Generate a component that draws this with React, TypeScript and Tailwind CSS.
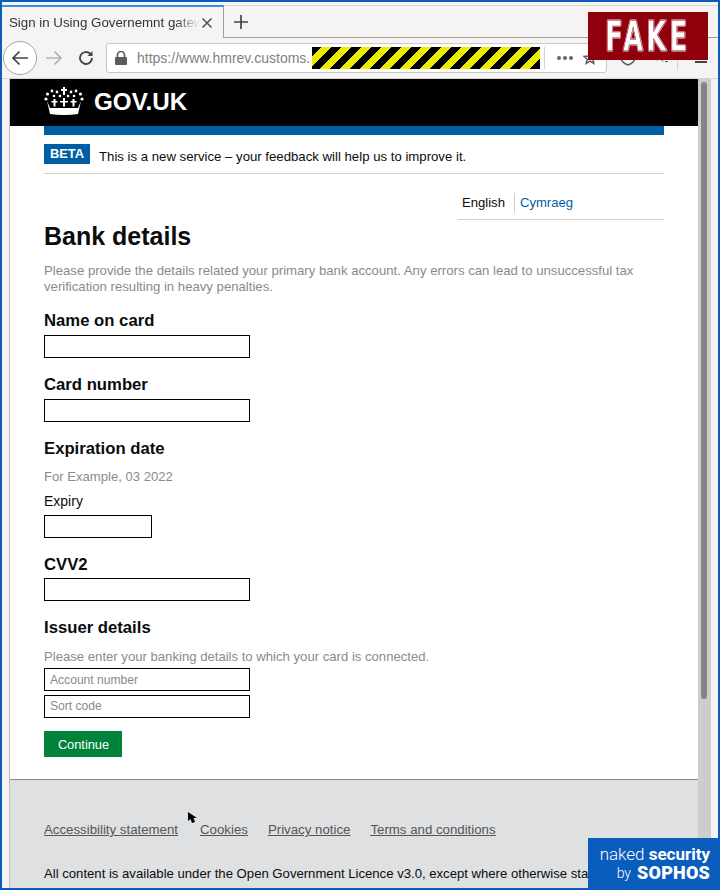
import * as React from 'react'

function Crown() {
	return (
		<svg width="40" height="30" viewBox="0 0 40 30" fill="white" className="-mt-[4px]">
			<rect x="19" y="1" width="2" height="8" />
			<rect x="17" y="3" width="6" height="2" />
			<circle cx="13" cy="6" r="1.4" />
			<circle cx="27" cy="6" r="1.4" />
			<circle cx="8" cy="5" r="1.4" />
			<circle cx="32" cy="5" r="1.4" />
			<circle cx="3.5" cy="8" r="1.6" />
			<circle cx="36.5" cy="8" r="1.6" />
			<circle cx="2" cy="13" r="1.6" />
			<circle cx="38" cy="13" r="1.6" />
			<circle cx="16" cy="10" r="1.3" />
			<circle cx="24" cy="10" r="1.3" />
			<circle cx="10" cy="10" r="1.3" />
			<circle cx="30" cy="10" r="1.3" />
			<path d="M19 12h2v3h3v1.500h-3v4h-2v-4h-3V15h3z" />
			<path d="M9.500 13h2v2h2v1.500h-2v4h-2v-4h-2V15h2zM28.500 13h2v2h2v1.500h-2v4h-2v-4h-2V15h2z" />
			<path d="M3 15l3 7h28l3-7-3 13q-14 2-28 0z" />
		</svg>
	)
}

function Field({label, width = 'w-[206px]'}: {label: string; width?: string}) {
	return <input aria-label={label} className={`block ${width} h-[23px] border border-black bg-white`} />
}

export default function App() {
	return (
		<div className="relative h-[890px] w-[720px] overflow-hidden border-2 border-[#0a5cbd] bg-[#f5f4f2] font-['Liberation_Sans',sans-serif]">
			{/* tab strip */}
			<div className="flex h-[36px] items-start pt-[3px]">
				<div className="flex h-[33px] w-[222px] items-center border-t-2 border-r border-t-[#3b8de0] border-r-[#a09f9d] pl-[7px] text-[13.300px] text-[#333]">
					<span className="w-[190px] shrink-0 overflow-hidden whitespace-nowrap [mask-image:linear-gradient(to_right,#000_88%,transparent)]">Sign in Using Governemnt gatew</span>
					<svg width="12" height="12" viewBox="0 0 12 12" className="ml-[2px]" stroke="#555" strokeWidth="1.6"><path d="M1.500 1.500l9 9M10.500 1.500l-9 9" /></svg>
				</div>
				<div className="flex h-[33px] flex-1 items-center border-t border-b border-[#d6d5d2] border-b-[#a09f9d] pl-[9px]">
					<svg width="16" height="16" viewBox="0 0 16 16" stroke="#444" strokeWidth="1.7"><path d="M8 1v14M1 8h14" /></svg>
				</div>
			</div>
			{/* toolbar */}
			<div className="flex h-[41px] items-center border-b border-[#d6d5d2] pl-px">
				<div className="flex h-[34px] w-[34px] items-center justify-center rounded-full border border-[#a5a5a5] bg-white">
					<svg width="18" height="16" viewBox="0 0 18 16" fill="none" stroke="#444" strokeWidth="1.7"><path d="M17 8H2M8.500 1.500L2 8l6.500 6.500" /></svg>
				</div>
				<svg width="18" height="16" viewBox="0 0 18 16" fill="none" stroke="#b2b2b2" strokeWidth="1.7" className="ml-[8px]"><path d="M1 8h15M9.500 1.500L16 8l-6.500 6.500" /></svg>
				<svg width="16" height="16" viewBox="0 0 16 16" fill="none" stroke="#444" strokeWidth="1.900" className="ml-[15px]"><path d="M14 8a6 6 0 1 1-2-4.500L14 5" /><path d="M14.500 1v5h-5" fill="#444" stroke="none" /></svg>
				<div className="ml-[12px] flex h-[30px] w-[501px] shrink-0 items-center rounded-[3px] border border-[#c9c8c4] bg-white pl-[8px]">
					<svg width="12" height="14" viewBox="0 0 12 14"><path d="M2.500 6V4a3.500 3.500 0 0 1 7 0v2" fill="none" stroke="#5c5c5c" strokeWidth="1.700" /><rect x="0" y="6" width="12" height="8" rx="1" fill="#5c5c5c" /></svg>
					<span className="ml-[10px] w-[175px] overflow-hidden whitespace-nowrap text-[14px] text-[#808080]">https://www.hmrev.customs.</span>
					<div className="h-[22px] w-[228px] bg-[repeating-linear-gradient(135deg,#000_0,#000_7.070px,#ecec00_7.070px,#ecec00_14.140px)]" />
					<div className="ml-[4px] h-[22px] w-px bg-[#d6d5d2]" />
					<div className="ml-[12px] flex gap-[2px]">
						<span className="h-[4px] w-[4px] rounded-full bg-[#666]" />
						<span className="h-[4px] w-[4px] rounded-full bg-[#666]" />
						<span className="h-[4px] w-[4px] rounded-full bg-[#666]" />
					</div>
					<svg width="14" height="14" viewBox="0 0 14 14" fill="none" stroke="#5c5c5c" strokeWidth="1.500" className="ml-[10px]"><path d="M7 1l1.800 4 4.200.4-3.200 2.800 1 4.200L7 10.200 3.200 12.400l1-4.200L1 5.400 5.200 5z" /></svg>
				</div>
				<svg width="16" height="16" viewBox="0 0 16 16" fill="none" stroke="#5c5c5c" strokeWidth="1.500" className="ml-[13px]"><path d="M1 2h14v6c0 3-3 5.500-7 7-4-1.500-7-4-7-7z" /></svg>
				<svg width="14" height="14" viewBox="0 0 14 14" fill="#5c5c5c" className="ml-[18px]"><path d="M1 1l8 3-2 3 3 4-5-3-2 2z" /><rect x="11" y="10" width="3" height="1" /></svg>
				<div className="ml-[9px] h-[24px] w-px bg-[#d6d5d2]" />
				<div className="ml-[15px] h-[2px] w-[12px] translate-x-[2px] translate-y-[4px] bg-[#444]" />
			</div>

			{/* page */}
			<div className="flex h-[811px]">
				<div className="w-[8px] border-r border-[#bdbcb9]" />
				<div className="w-[688px] bg-white">
					<div className="flex h-[47px] items-center bg-black pl-[34px]">
						<Crown />
						<span className="ml-[10px] text-[24.200px] font-bold text-white">GOV.UK</span>
					</div>
					<div className="px-[34px]">
						<div className="h-[9px] bg-[#005ea5]" />
						<div className="flex h-[39px] items-start border-b border-[#d0d0d0] pt-[9px]">
							<span className="flex h-[20px] w-[46px] items-center justify-center bg-[#005ea5] text-[12.900px] font-bold text-white">BETA</span>
							<span className="ml-[9px] mt-[3px] text-[13.200px] text-[#0b0c0c]">This is a new service – your feedback will help us to improve it.</span>
						</div>
						<div className="ml-auto mt-[18px] flex h-[28px] w-[206px] items-start border-b border-[#d0d0d0] pl-[4px] pt-px text-[13.100px]">
							<span className="pr-[9px] text-[#0b0c0c]">English</span>
							<span className="border-l border-[#d0d0d0] pl-[5px] text-[#005ea5]">Cymraeg</span>
						</div>
						<h1 className="text-[25px] font-bold leading-[32px] text-[#0b0c0c]">Bank details</h1>
						<p className="mt-[11px] w-[610px] text-[13.170px] leading-[16px] text-[#8a8a8a]">Please provide the details related your primary bank account. Any errors can lead to unsuccessful tax verification resulting in heavy penalties.</p>
						<h2 className="mt-[16px] text-[16.700px] font-bold leading-[20px] text-[#0b0c0c]">Name on card</h2>
						<div className="mt-[4px]"><Field label="Name on card" /></div>
						<h2 className="mt-[17px] text-[16.700px] font-bold leading-[20px] text-[#0b0c0c]">Card number</h2>
						<div className="mt-[4px]"><Field label="Card number" /></div>
						<h2 className="mt-[17px] text-[16.700px] font-bold leading-[20px] text-[#0b0c0c]">Expiration date</h2>
						<p className="mt-[10px] text-[13.100px] leading-[16px] text-[#8a8a8a]">For Example, 03 2022</p>
						<p className="mt-[8px] text-[14px] leading-[16px] text-[#0b0c0c]">Expiry</p>
						<div className="mt-[6px]"><Field label="Expiry" width="w-[108px]" /></div>
						<h2 className="mt-[17px] text-[16.700px] font-bold leading-[20px] text-[#0b0c0c]">CVV2</h2>
						<div className="mt-[3px]"><Field label="CVV2" /></div>
						<h2 className="mt-[17px] text-[16.700px] font-bold leading-[20px] text-[#0b0c0c]">Issuer details</h2>
						<p className="mt-[11px] text-[13.130px] leading-[16px] text-[#8a8a8a]">Please enter your banking details to which your card is connected.</p>
						<input placeholder="Account number" className="mt-[3px] block h-[23px] w-[206px] border border-black bg-white pl-[5px] text-[12.100px] placeholder:text-[#8a8a8a]" />
						<input placeholder="Sort code" className="mt-[4px] block h-[23px] w-[206px] border border-black bg-white pl-[5px] pb-[2px] text-[12.100px] placeholder:text-[#8a8a8a]" />
						<button className="mt-[13px] block h-[26px] w-[78px] bg-[#00823b] pl-px pt-px text-[12.800px] text-white">Continue</button>
					</div>
					<div className="mt-[22px] h-full border-t border-[#8a8a8a] bg-[#dee0e2] px-[34px] pt-[42px]">
						<div className="flex text-[13.250px] leading-[16px] text-[#555] underline">
							<a>Accessibility statement</a>
							<a className="ml-[22px]">Cookies</a>
							<a className="ml-[20px]">Privacy notice</a>
							<a className="ml-[20px]">Terms and conditions</a>
						</div>
						<p className="mt-[28px] whitespace-nowrap text-[13.130px] leading-[16px] text-[#0b0c0c]">All content is available under the Open Government Licence v3.0, except where otherwise stated</p>
					</div>
				</div>
				{/* scrollbar */}
				<div className="w-[13px] bg-[#cdcdcd] pl-[3px] pt-[3px]">
					<div className="h-[617px] w-[6px] rounded-full bg-[#858585]" />
				</div>
			</div>

			{/* overlays */}
			<div className="absolute left-[586px] top-[10px] flex h-[48px] w-[120px] items-center justify-center bg-[#8f000c]">
				<span className="scale-x-[0.62] text-[42px] font-bold tracking-[5px] text-white font-['DejaVu_Sans',sans-serif] [-webkit-text-stroke:0.8px_#a02030] [text-shadow:1px_0_#e8c8cc,-1px_0_#e8c8cc,0_1px_#e8c8cc,0_-1px_#e8c8cc]">FAKE</span>
			</div>
			<div className="absolute bottom-0 left-[586px] flex h-[50px] w-[130px] flex-col items-end justify-center bg-[#0a5cbd] pr-[8px] text-white font-['Roboto',sans-serif]">
				<div className="whitespace-nowrap text-[17px] font-light leading-[19px]">naked <span className="font-bold">security</span></div>
				<div className="flex items-center whitespace-nowrap leading-[18px]">
					<span className="mr-[6px] text-[14px] font-light">by</span>
					<span className="text-[18px] font-black tracking-[0.2px]">SOPHOS</span>
				</div>
			</div>
			{/* mouse pointer */}
			<svg width="10" height="13" viewBox="0 0 10 13" className="absolute left-[186px] top-[810px]"><path d="M0 0l0 9 2.500-2 1.500 4 3-1-1.500-4h3.500z" fill="#000" /></svg>
		</div>
	)
}
